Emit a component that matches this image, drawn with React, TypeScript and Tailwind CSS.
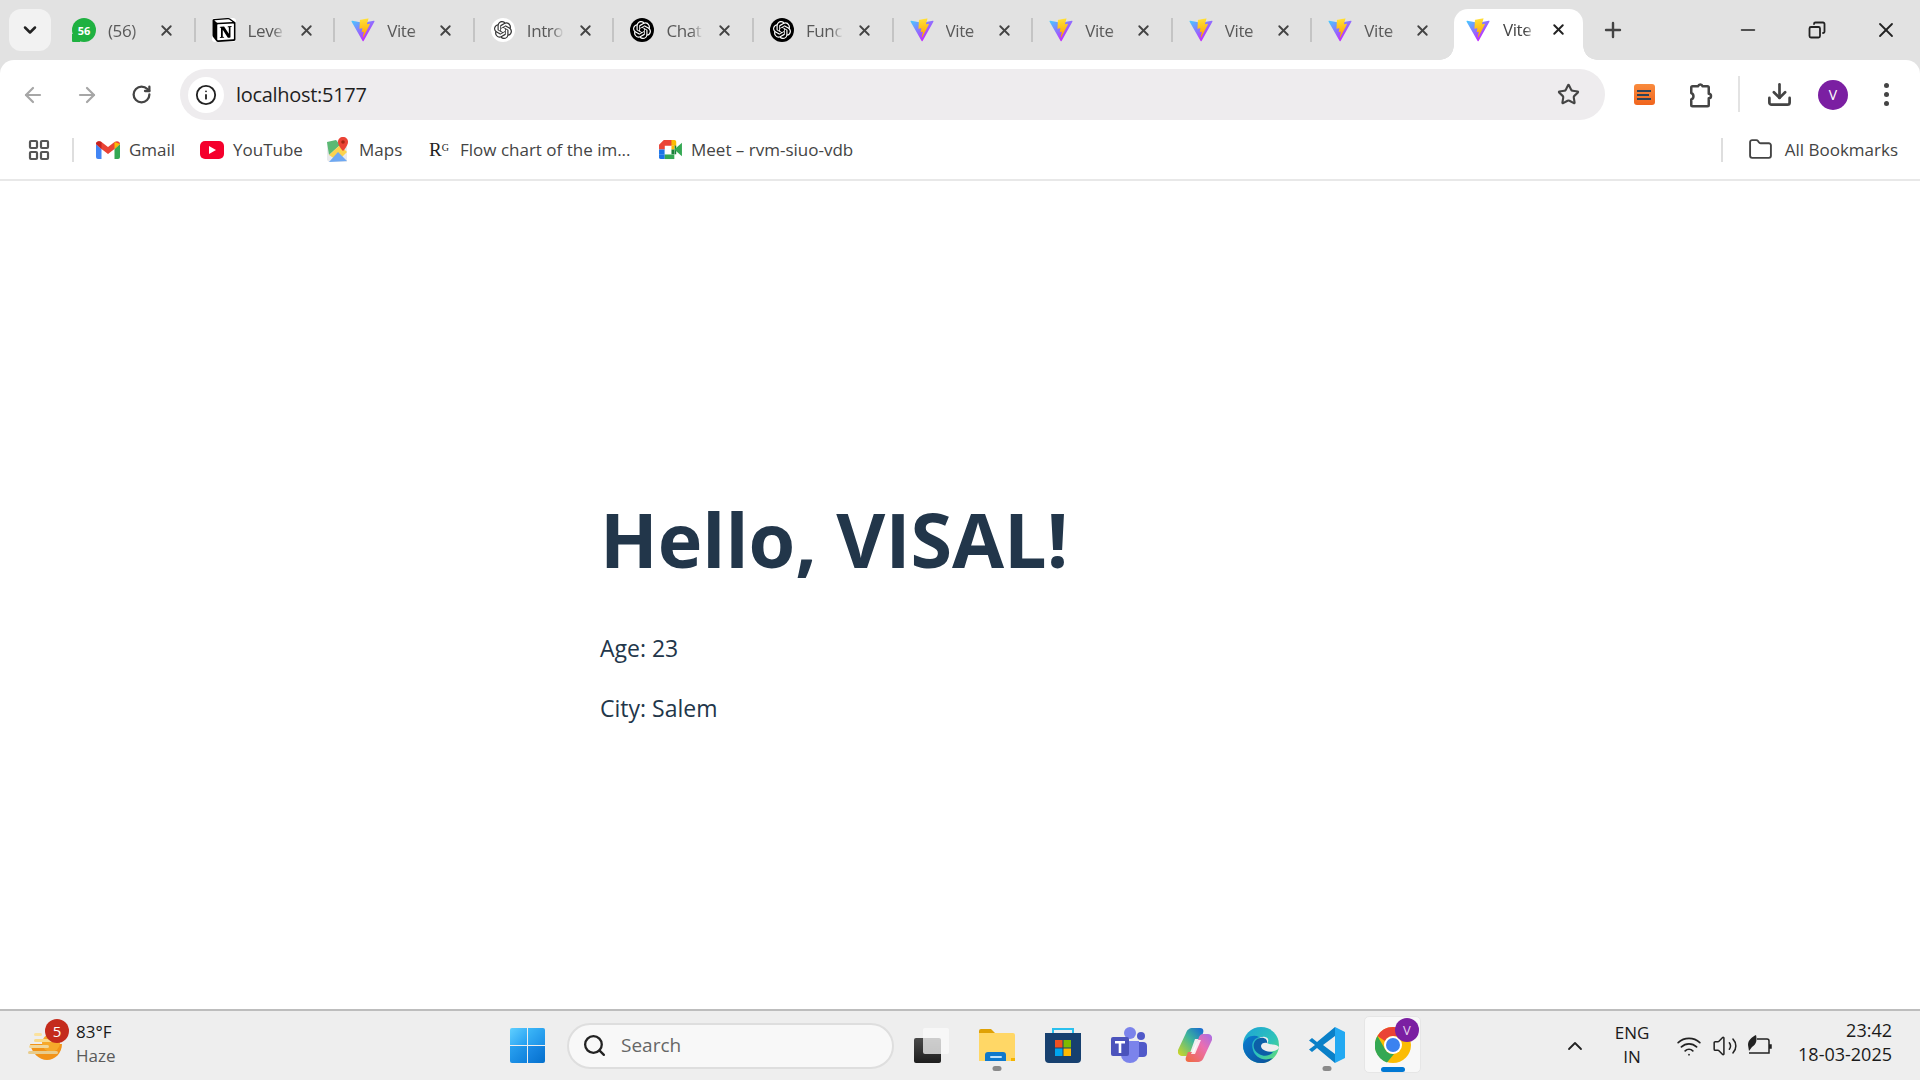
import { ArrowLeft, ArrowRight, ChevronDown, ChevronUp, Copy, Download, Folder, Info, LayoutGrid, Minus, Plus, RotateCw, Search, Star, Volume2, Wifi, X } from "lucide-react";
import { SiNotion, SiOpenai } from "react-icons/si";

const font = "font-['Open_Sans','Noto_Sans',sans-serif]";

function ViteIcon({ className }: { className?: string }) {
  return (
    <svg viewBox="0 0 410 404" className={className}>
      <defs>
        <linearGradient id="vite-a" x1="6" y1="33" x2="235" y2="344" gradientUnits="userSpaceOnUse">
          <stop stopColor="#41D1FF" />
          <stop offset="1" stopColor="#BD34FE" />
        </linearGradient>
        <linearGradient id="vite-b" x1="194" y1="8" x2="236" y2="292" gradientUnits="userSpaceOnUse">
          <stop stopColor="#FFEA83" />
          <stop offset="0.08" stopColor="#FFDD35" />
          <stop offset="1" stopColor="#FFA800" />
        </linearGradient>
      </defs>
      <path d="M399.641 59.5246L215.643 388.545C211.844 395.338 202.084 395.378 198.228 388.618L10.5817 59.5563C6.38087 52.1896 12.6802 43.2665 21.0281 44.7586L205.223 77.6824C206.398 77.8924 207.601 77.8904 208.776 77.6763L389.119 44.8058C397.439 43.2894 403.768 52.1434 399.641 59.5246Z" fill="url(#vite-a)" />
      <path d="M292.965 1.5744L156.801 28.2552C154.563 28.6937 152.906 30.5903 152.771 32.8664L144.395 174.33C144.198 177.662 147.258 180.248 150.51 179.498L188.42 170.749C191.967 169.931 195.172 173.055 194.443 176.622L183.18 231.775C182.422 235.487 185.907 238.661 189.532 237.56L212.947 230.446C216.577 229.344 220.065 232.527 219.297 236.242L201.398 322.875C200.278 328.294 207.486 331.249 210.492 326.603L212.5 323.5L323.454 102.072C325.312 98.3645 322.108 94.137 318.036 94.9228L279.014 102.454C275.347 103.161 272.227 99.746 273.262 96.1583L298.731 7.86689C299.767 4.27314 296.636 0.855181 292.965 1.5744Z" fill="url(#vite-b)" />
    </svg>
  );
}

function ChatBadge() {
  return (
    <div className="relative w-6 h-6 rounded-full bg-[#1fb141] flex items-center justify-center">
      <span className="absolute left-0 bottom-0 w-[8px] h-[8px] bg-[#1fb141] rounded-bl-[1px]" />
      <span className="relative text-white text-[11px] font-bold leading-none">56</span>
    </div>
  );
}

function NotionIcon() {
  return (
    <div className="w-6 h-6 bg-white rounded-[3px] flex items-center justify-center">
      <SiNotion className="w-6 h-6 text-black" />
    </div>
  );
}

function GptWhite() {
  return (
    <div className="w-6 h-6 rounded-full bg-white flex items-center justify-center">
      <SiOpenai className="w-[18px] h-[18px] text-[#333]" />
    </div>
  );
}

function GptBlack() {
  return (
    <div className="w-6 h-6 rounded-full bg-black flex items-center justify-center">
      <SiOpenai className="w-[18px] h-[18px] text-white" />
    </div>
  );
}

const tabs = [
  { icon: <ChatBadge />, title: "(56)" },
  { icon: <NotionIcon />, title: "Leve" },
  { icon: <ViteIcon className="w-6 h-6" />, title: "Vite" },
  { icon: <GptWhite />, title: "Intro" },
  { icon: <GptBlack />, title: "Chat" },
  { icon: <GptBlack />, title: "Func" },
  { icon: <ViteIcon className="w-6 h-6" />, title: "Vite" },
  { icon: <ViteIcon className="w-6 h-6" />, title: "Vite" },
  { icon: <ViteIcon className="w-6 h-6" />, title: "Vite" },
  { icon: <ViteIcon className="w-6 h-6" />, title: "Vite" },
];

function Tab({ icon, title, last }: { icon: React.ReactNode; title: string; last: boolean }) {
  return (
    <div className="w-[139.6px] h-[42px] flex items-center pl-4 shrink-0">
      <div className="w-6 flex justify-center shrink-0">{icon}</div>
      <span className="ml-[12px] mt-[2px] w-[42px] whitespace-nowrap text-[17px] tracking-[-0.4px] text-[#595959] [mask-image:linear-gradient(to_right,black_60%,transparent_88%)]">{title}</span>
      <X className="ml-[8px] w-[17px] h-[17px] text-[#444] shrink-0" strokeWidth={2.6} />
      <div className={last ? "ml-auto w-[2px] h-6" : "ml-auto w-[2px] h-6 bg-[#c4c4c4]"} />
    </div>
  );
}

function TabStrip() {
  return (
    <div className="h-[60px] bg-[#e2e2e2] flex items-end shrink-0">
      <div className="ml-[9px] mb-[9px] w-[42px] h-[42px] rounded-[12px] bg-[#f2f2f2] flex items-center justify-center">
        <ChevronDown className="w-5 h-5 text-[#222]" strokeWidth={3} />
      </div>
      <div className="ml-[5px] flex items-center self-start mt-[9px]">
        {tabs.map((t, i) => (
          <Tab key={i} icon={t.icon} title={t.title} last={i === tabs.length - 1} />
        ))}
      </div>
      <div className="relative ml-[2px] w-[129px] h-[51px] bg-white rounded-t-[14px] flex items-start pt-[9px] pl-3 shrink-0 self-end">
        <span className="absolute left-[-14px] bottom-0 w-[14px] h-[14px] bg-[radial-gradient(circle_at_0_0,transparent_13.5px,white_14px)]" />
        <span className="absolute right-[-14px] bottom-0 w-[14px] h-[14px] bg-[radial-gradient(circle_at_100%_0,transparent_13.5px,white_14px)]" />
        <ViteIcon className="w-6 h-6 shrink-0" />
        <span className="ml-[13px] w-[32px] whitespace-nowrap text-[17px] tracking-[-0.4px] leading-6 text-[#444] [mask-image:linear-gradient(to_right,black_70%,transparent_100%)]">Vite</span>
        <X className="ml-[15px] mt-[3px] w-[17px] h-[17px] text-[#222] shrink-0" strokeWidth={2.8} />
      </div>
      <div className="ml-[12px] mb-[12px] w-9 h-9 flex items-center justify-center self-end">
        <Plus className="w-6 h-6 text-[#444]" strokeWidth={2.4} />
      </div>
      <div className="ml-auto flex self-start">
        <div className="w-[69px] h-[60px] flex items-center justify-center"><Minus className="w-[22px] h-[22px] text-[#222]" strokeWidth={1.8} /></div>
        <div className="w-[69px] h-[60px] flex items-center justify-center"><Copy className="w-[18px] h-[18px] text-[#222] -scale-x-100" strokeWidth={2.4} /></div>
        <div className="w-[69px] h-[60px] flex items-center justify-center"><X className="w-[24px] h-[24px] text-[#222]" strokeWidth={1.8} /></div>
      </div>
    </div>
  );
}

function Toolbar() {
  return (
    <div className="h-[69px] bg-[#e2e2e2] shrink-0">
      <div className="h-full bg-white rounded-t-[14px] flex items-start pt-[9px] pl-[6px]">
        <div className="w-[54px] h-[51px] flex items-center justify-center"><ArrowLeft className="w-6 h-6 text-[#a6a6a6]" strokeWidth={2.2} /></div>
        <div className="w-[53px] h-[51px] flex items-center justify-center"><ArrowRight className="w-6 h-6 text-[#a6a6a6]" strokeWidth={2.2} /></div>
        <div className="w-[56px] h-[51px] flex items-center justify-center"><RotateCw className="w-[21px] h-[21px] text-[#444]" strokeWidth={2.6} /></div>
        <div className="ml-[11px] w-[1425px] h-[51px] rounded-full bg-[#eeecee] flex items-center pl-[8px] pr-[25px]">
          <div className="w-[36px] h-[36px] rounded-full bg-white flex items-center justify-center shrink-0">
            <Info className="w-[22px] h-[22px] text-[#222]" strokeWidth={2} />
          </div>
          <span className="ml-[12px] text-[20px] tracking-[-0.3px] text-[#1f1f1f]">localhost:5177</span>
          <Star className="ml-auto w-[23px] h-[23px] text-[#444]" strokeWidth={2.2} />
        </div>
        <div className="w-[79px] h-[51px] flex items-center justify-center">
          <div className="w-[21px] h-[21px] rounded-[3px] bg-gradient-to-b from-[#f98b3d] to-[#f0641c] flex flex-col gap-[2px] items-start pl-[3px] justify-center">
            <span className="w-[14px] h-[2px] bg-[#2d4358]" />
            <span className="w-[12px] h-[2px] bg-[#2d4358]" />
            <span className="w-[14px] h-[2px] bg-[#2d4358]" />
          </div>
        </div>
        <div className="w-8 h-[51px] flex items-center justify-center">
          <svg viewBox="0 0 24 24" className="w-[30px] h-[30px]" fill="none" stroke="#444" strokeWidth="2" strokeLinejoin="round">
            <path d="M6 5h4.500a1.800 1.800 0 0 1 3.500 0H18a1 1 0 0 1 1 1v5a1.800 1.800 0 0 1 0 3.600V20a1 1 0 0 1-1 1H6a1 1 0 0 1-1-1v-4.400a2.800 2.800 0 0 0 0-5.200V6a1 1 0 0 1 1-1z" />
          </svg>
        </div>
        <div className="ml-[22px] mt-[7px] w-[2px] h-[36px] bg-[#e3e3e3]" />
        <div className="w-[78px] h-[51px] flex items-center justify-center">
          <Download className="w-[27px] h-[27px] text-[#444]" strokeWidth={2.4} />
        </div>
        <div className="w-[30px] h-[51px] flex items-center">
          <div className="w-[30px] h-[30px] rounded-full bg-[#7b1fa2] flex items-center justify-center text-white text-[14px]">V</div>
        </div>
        <div className="ml-[36px] h-[51px] flex flex-col items-center justify-center gap-1">
          <span className="w-[5px] h-[5px] rounded-full bg-[#444]" />
          <span className="w-[5px] h-[5px] rounded-full bg-[#444]" />
          <span className="w-[5px] h-[5px] rounded-full bg-[#444]" />
        </div>
      </div>
    </div>
  );
}

function GmailIcon() {
  return (
    <svg viewBox="0 0 24 18" className="w-6 h-[18px]">
      <path d="M0 3v13a2 2 0 0 0 2 2h3.500V8z" fill="#4285f4" />
      <path d="M24 3v13a2 2 0 0 1-2 2h-3.500V8z" fill="#34a853" />
      <path d="M0 3c0-3 3.500-3.500 5.500-2L12 6l6.500-5c2-1.500 5.500-1 5.500 2l-5.500 5L12 13 5.500 8z" fill="#ea4335" />
      <path d="M18.500 1 24 3l-5.500 5z" fill="#fbbc04" />
      <path d="M0 3l5.500 5V1C3.500-.5 0 0 0 3z" fill="#c5221f" />
    </svg>
  );
}

function YoutubeIcon() {
  return (
    <div className="w-6 h-[18px] rounded-[5px] bg-[#f5002c] flex items-center justify-center">
      <div className="w-0 h-0 border-y-[4px] border-y-transparent border-l-[7px] border-l-white" />
    </div>
  );
}

function MapsIcon() {
  return (
    <svg viewBox="0 0 24 26" className="w-6 h-[26px]">
      <path d="M1 5 13 3 21 10 21 25 3 25 1 23z" fill="#e8eaed" />
      <path d="M1 5 10 3 14 8 3 18z" fill="#5bb974" />
      <path d="M3 18 14 8 21 15 12 24z" fill="#fbd34d" />
      <path d="M3 25 12 15 21 24z" fill="#6ea8f2" />
      <path d="M17 0c-3 0-5 2-5 5 0 4 5 9 5 9s5-5 5-9c0-3-2-5-5-5z" fill="#ea4335" />
      <circle cx="17" cy="5" r="1.800" fill="#a52714" />
    </svg>
  );
}

function MeetIcon() {
  return (
    <svg viewBox="0 0 24 22" className="w-[23px] h-[21px]">
      <path d="M5 1h11v6H6v4H0V6z" fill="#ea4335" />
      <path d="M0 11h6v5H0z" fill="#1a73e8" />
      <path d="M0 16h6v5H2a2 2 0 0 1-2-2z" fill="#1a73e8" />
      <path d="M6 16h10v5H6z" fill="#34a853" />
      <path d="M16 1h-3v6h3v3l2-2V3a2 2 0 0 0-2-2z" fill="#fbbc04" />
      <path d="M16 7v9h2V7z" fill="#188038" />
      <path d="M16 11l8-7v14z" fill="#34a853" />
      <path d="M13 7h3v9H6v-5h7z" fill="#fff" />
      <path d="M13 7h3v4l-3 0z" fill="#fbbc04" />
      <path d="M13 11l3 0v5h-3z" fill="#188038" />
    </svg>
  );
}

function Bookmark({ icon, label, width }: { icon: React.ReactNode; label: string; width: string }) {
  return (
    <div className={`flex items-center gap-[9px] ${width}`}>
      <div className="w-6 flex justify-center shrink-0">{icon}</div>
      <span className="text-[17px] text-[#444] whitespace-nowrap">{label}</span>
    </div>
  );
}

function BookmarksBar() {
  return (
    <div className="h-[52px] bg-white border-b-2 border-[#e8e8e8] flex items-center pl-[27px] pb-[9px] shrink-0">
      <LayoutGrid className="w-[24px] h-[24px] text-[#555]" strokeWidth={2.2} />
      <div className="ml-[21px] w-[2px] h-6 bg-[#dedede]" />
      <div className="ml-[22px] flex items-center">
        <Bookmark icon={<GmailIcon />} label="Gmail" width="w-[104px]" />
        <Bookmark icon={<YoutubeIcon />} label="YouTube" width="w-[126px]" />
        <Bookmark icon={<MapsIcon />} label="Maps" width="w-[101px]" />
        <Bookmark icon={<span className="font-['Liberation_Serif',serif] text-[19px] text-[#222] leading-none">R<sup className="text-[10px]">G</sup></span>} label="Flow chart of the im..." width="w-[231px]" />
        <Bookmark icon={<MeetIcon />} label="Meet – rvm-siuo-vdb" width="w-[260px]" />
      </div>
      <div className="ml-auto w-[2px] h-6 bg-[#dedede]" />
      <Folder className="ml-[25px] w-[25px] h-[25px] text-[#444]" strokeWidth={1.8} />
      <span className="ml-[12px] mr-[22px] text-[17px] text-[#444] whitespace-nowrap">All Bookmarks</span>
    </div>
  );
}

function WeatherIcon() {
  return (
    <svg viewBox="0 0 36 30" className="w-9 h-[30px]">
      <path d="M2 13h32c0 9-7 16-15 16S4 22 2 13z" fill="#f29318" />
      <circle cx="23" cy="12" r="9" fill="#f6a92b" />
      <rect x="6" y="2" width="8" height="3" rx="1.500" fill="#fbe29e" />
      <rect x="6" y="8" width="18" height="3" rx="1.500" fill="#f8d98a" />
      <rect x="1" y="14" width="20" height="3" rx="1.500" fill="#f1d79a" />
      <rect x="0" y="20" width="30" height="3" rx="1.500" fill="#e8cc8c" />
    </svg>
  );
}

function WindowsLogo() {
  return (
    <div className="w-[35px] h-[35px] grid grid-cols-2 gap-[1.500px]">
      <span className="rounded-tl-[2px] bg-gradient-to-br from-[#5fd0ff] to-[#1e9cf0]" />
      <span className="rounded-tr-[2px] bg-gradient-to-br from-[#3db8f8] to-[#1a8fe6]" />
      <span className="rounded-bl-[2px] bg-gradient-to-br from-[#2aa2f0] to-[#0d7fdb]" />
      <span className="rounded-br-[2px] bg-gradient-to-br from-[#1c8de8] to-[#0470cc]" />
    </div>
  );
}

function CopyApp() {
  return (
    <svg viewBox="0 0 36 36" className="w-9 h-9">
      <defs>
        <linearGradient id="dark-win" x1="0" y1="0" x2="0" y2="1"><stop stopColor="#4a4a4a" /><stop offset="1" stopColor="#1d1d1d" /></linearGradient>
      </defs>
      <rect x="1" y="11" width="27" height="25" rx="2" fill="url(#dark-win)" />
      <rect x="10" y="1" width="26" height="26" rx="2" fill="#fafafa" fillOpacity="0.75" />
    </svg>
  );
}

function ExplorerIcon() {
  return (
    <svg viewBox="0 0 36 36" className="w-9 h-9">
      <path d="M0 4a2 2 0 0 1 2-2h10l4 4h-16z" fill="#dfa106" />
      <path d="M0 6h34a2 2 0 0 1 2 2v26H0z" fill="#ffd766" />
      <path d="M32 34h4v-3l-4-0z" fill="#f4b400" />
      <path d="M6 34v-6a3 3 0 0 1 3-3h15a3 3 0 0 1 3 3v6z" fill="#0f79cc" />
      <rect x="11" y="29" width="12" height="2" rx="1" fill="#bfe3fb" />
    </svg>
  );
}

function StoreIcon() {
  return (
    <svg viewBox="0 0 36 36" className="w-9 h-9">
      <path d="M8 6V2h20v4" fill="none" stroke="#2ac0ee" strokeWidth="2" />
      <path d="M0 6h36v26a4 4 0 0 1-4 4H4a4 4 0 0 1-4-4z" fill="#17406f" />
      <rect x="10" y="13" width="7.500" height="7.500" fill="#f25022" />
      <rect x="18.500" y="13" width="7.500" height="7.500" fill="#7fba00" />
      <rect x="10" y="21.500" width="7.500" height="7.500" fill="#00a4ef" />
      <rect x="18.500" y="21.500" width="7.500" height="7.500" fill="#ffb900" />
    </svg>
  );
}

function TeamsIcon() {
  return (
    <svg viewBox="0 0 36 36" className="w-9 h-9">
      <circle cx="30" cy="9" r="4" fill="#5059c9" />
      <rect x="24" y="15" width="12" height="15" rx="4" fill="#5059c9" />
      <circle cx="19" cy="6" r="6" fill="#7b83eb" />
      <path d="M10 14h18v14a9 8 0 0 1-18 0z" fill="#7b83eb" />
      <rect x="0" y="10" width="18" height="19" rx="2" fill="#4b53bc" />
      <path d="M4 14h10v2.500h-3.700V26H7.700v-9.500H4z" fill="#fff" />
    </svg>
  );
}

function CopilotIcon() {
  return (
    <svg viewBox="0 0 34 34" className="w-[34px] h-[34px]">
      <defs>
        <linearGradient id="cop-a" x1="0" y1="1" x2="1" y2="0"><stop stopColor="#d8d81e" /><stop offset="0.55" stopColor="#3eb59b" /><stop offset="1" stopColor="#1463d6" /></linearGradient>
        <linearGradient id="cop-b" x1="0" y1="1" x2="1" y2="0"><stop stopColor="#f06a3a" /><stop offset="0.6" stopColor="#ea6fb0" /><stop offset="1" stopColor="#a66de8" /></linearGradient>
      </defs>
      <path d="M8 5c1-3 3-5 7-5h7c3 0 4 2 3 5l-2 6h-6l-5 14c-1 2-2 3-4 3H4c-3 0-5-3-4-6z" fill="url(#cop-a)" />
      <path d="M26 29c-1 3-3 5-7 5h-8c-3 0-4-2-3-5l2-5h6l5-15c1-2 2-3 4-3h5c3 0 5 3 4 6z" fill="url(#cop-b)" />
      <path d="M20 12h3l-6 14h-4z" fill="#fff" fillOpacity="0.85" />
    </svg>
  );
}

function EdgeIcon() {
  return (
    <svg viewBox="0 0 36 36" className="w-9 h-9">
      <defs>
        <linearGradient id="edge-a" x1="0" y1="0" x2="1" y2="1"><stop stopColor="#1ba2d8" /><stop offset="0.6" stopColor="#2fc4b8" /><stop offset="1" stopColor="#6fe06a" /></linearGradient>
        <linearGradient id="edge-b" x1="0" y1="0" x2="1" y2="1"><stop stopColor="#0a7dd1" /><stop offset="1" stopColor="#0c4f97" /></linearGradient>
      </defs>
      <circle cx="18" cy="18" r="18" fill="url(#edge-a)" />
      <path d="M0 18C2 10 10 7 16 10c-6 2-8 7-6 13 2 7 10 12 20 8-4 4-8 5-12 5C8 36 0 28 0 18z" fill="url(#edge-b)" />
      <path d="M36 20c0 3-6 5-13 5-5 0-10-3-10-8 0-5 5-8 9-7 5 1 3 6 2 6 3 2 9 1 12 4z" fill="#eeeeee" />
      <path d="M24 16c-2-1-6 0-6 3 0 4 6 6 12 6-3 4-9 5-14 2-6-3-7-10-3-14 5-4 12-2 11 3z" fill="#0c5fa8" />
    </svg>
  );
}

function VsCodeIcon() {
  return (
    <svg viewBox="0 0 36 36" className="w-9 h-9">
      <path d="M26 0 36 5v26l-10 5z" fill="#23a9f2" />
      <path d="M26 0v9L14 18l12 9v9L8 21l-5 4-3-2.500L6 18 0 13.500 3 11l5 4z" fill="#0a80c8" />
    </svg>
  );
}

function ChromeIcon() {
  return (
    <svg viewBox="0 0 36 36" className="w-9 h-9">
      <circle cx="18" cy="18" r="18" fill="#fbbc04" />
      <path d="M18 0a18 18 0 0 1 15.600 9H18a9 9 0 0 0-8 5L2.400 9A18 18 0 0 1 18 0z" fill="#ea4335" />
      <path d="M2.400 9 10 22a9 9 0 0 0 9 5l-7 8.500A18 18 0 0 1 2.400 9z" fill="#34a853" />
      <circle cx="18" cy="18" r="9" fill="#fff" />
      <circle cx="18" cy="18" r="7" fill="#3b82f0" />
    </svg>
  );
}

function Running() {
  return <span className="absolute left-1/2 -translate-x-1/2 top-[55px] w-[9px] h-[5px] rounded-full bg-[#8a8a8a]" />;
}

function AppSlot({ children, running }: { children: React.ReactNode; running?: boolean }) {
  return (
    <div className="relative w-[66px] h-[69px] flex items-center justify-center pb-[2px] shrink-0">
      {children}
      {running && <Running />}
    </div>
  );
}

function Taskbar() {
  return (
    <div className={`h-[71px] bg-[#eeeeee] border-t-2 border-[#bdbdbd] flex items-center shrink-0 ${font}`}>
      <div className="relative ml-[28px] w-[37px] shrink-0">
        <WeatherIcon />
        <span className="absolute left-[17px] top-[-12px] w-[24px] h-[24px] rounded-full bg-[#c42b1c] text-white text-[15px] leading-[24px] text-center">5</span>
      </div>
      <div className="ml-[11px] mb-[4px] w-[60px] flex flex-col text-[17px] leading-[24px] shrink-0">
        <span className="text-[#1a1a1a]">83°F</span>
        <span className="text-[#5a5a5a]">Haze</span>
      </div>
      <div className="ml-[374px] shrink-0"><WindowsLogo /></div>
      <div className="ml-[22px] w-[327px] h-[46px] rounded-full bg-[#f8f8f8] border-2 border-[#dedede] flex items-center pl-[13px] shrink-0">
        <Search className="w-[25px] h-[25px] text-[#222]" strokeWidth={2.2} />
        <span className="ml-[14px] text-[19px] text-[#666]">Search</span>
      </div>
      <div className="ml-[4px] flex items-center">
        <AppSlot><CopyApp /></AppSlot>
        <AppSlot running><ExplorerIcon /></AppSlot>
        <AppSlot><StoreIcon /></AppSlot>
        <AppSlot><TeamsIcon /></AppSlot>
        <AppSlot><CopilotIcon /></AppSlot>
        <AppSlot><EdgeIcon /></AppSlot>
        <AppSlot running><VsCodeIcon /></AppSlot>
        <div className="relative w-[57px] h-[57px] ml-[4px] mb-[2px] rounded-[5px] bg-[#f8f8f8] border border-[#e6e6e6] flex items-center justify-center">
          <ChromeIcon />
          <span className="absolute left-[30px] top-[1px] w-[24px] h-[24px] rounded-full bg-[#7b1fa2] text-[#e6d3ee] text-[13px] leading-[24px] text-center">V</span>
          <span className="absolute left-[16px] bottom-0 w-[24px] h-[5px] rounded-full bg-[#0078d4]" />
        </div>
      </div>
      <ChevronUp className="ml-[142px] w-[24px] h-[24px] text-[#222] shrink-0" strokeWidth={1.8} />
      <div className="ml-[28px] mb-[2px] w-[34px] flex flex-col items-center text-[17px] leading-[24px] text-[#1a1a1a] shrink-0">
        <span>ENG</span>
        <span>IN</span>
      </div>
      <Wifi className="ml-[27px] w-[26px] h-[26px] text-[#222] shrink-0" strokeWidth={1.6} />
      <Volume2 className="ml-[10px] w-[26px] h-[26px] text-[#222] shrink-0" strokeWidth={1.4} />
      <svg viewBox="0 0 26 24" className="ml-[9px] w-[26px] h-[24px] shrink-0" fill="none" stroke="#222" strokeWidth="1.500">
        <path d="M10 5h10a2 2 0 0 1 2 2v12H2" />
        <path d="M22 11h2v3h-2" fill="#222" />
        <path d="M1 11C1 6 5 3 9 1c1 4 1 9-4 12l-3 4" fill="#222" stroke="none" />
      </svg>
      <div className="ml-auto mr-[28px] mb-[7px] flex flex-col items-end text-[18px] leading-[24px] text-[#1a1a1a]">
        <span>23:42</span>
        <span>18-03-2025</span>
      </div>
    </div>
  );
}

export default function App() {
  return (
    <div className={`w-screen h-screen overflow-hidden flex flex-col bg-white ${font}`}>
      <TabStrip />
      <Toolbar />
      <BookmarksBar />
      <main className="flex-1 pl-[600px] pt-[312px] text-[#22364a]">
        <h1 className="text-[75.5px] font-bold leading-[92px]">Hello, VISAL!</h1>
        <p className="mt-[45px] text-[23px] leading-[36px]">Age: 23</p>
        <p className="mt-[24px] text-[23px] leading-[36px]">City: Salem</p>
      </main>
      <Taskbar />
    </div>
  );
}
